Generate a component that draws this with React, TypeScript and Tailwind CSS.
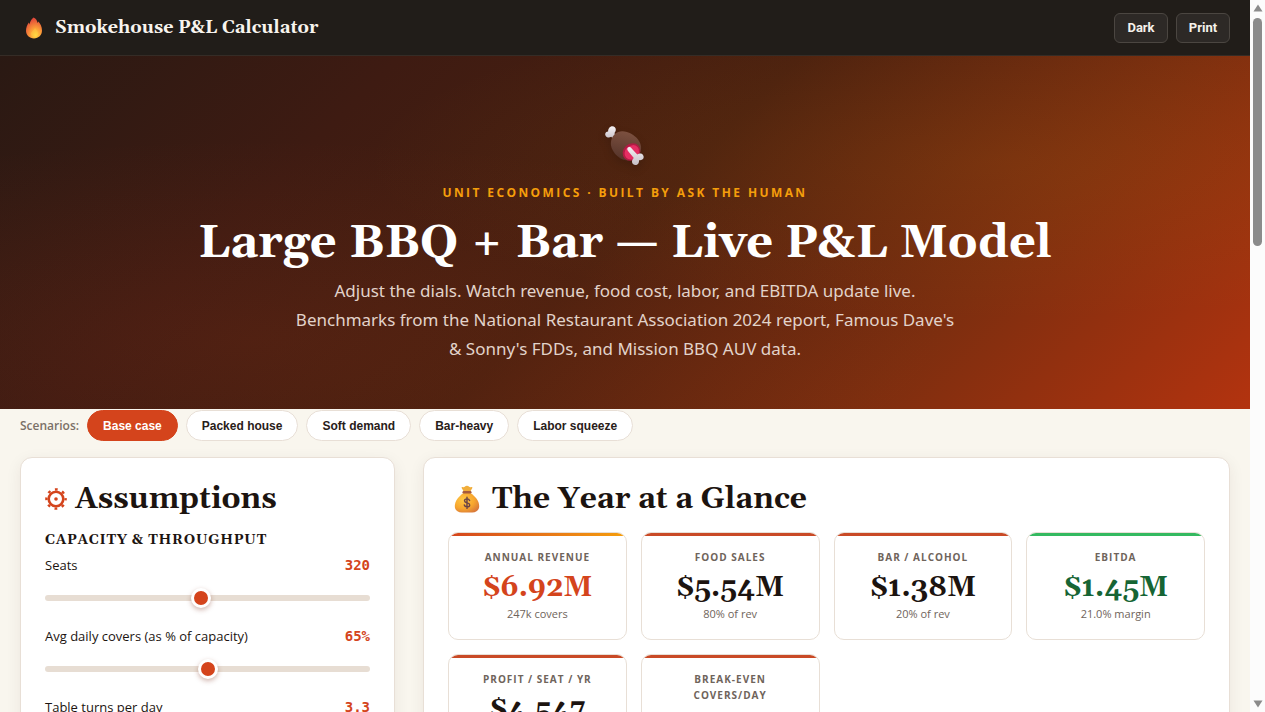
import { useState } from 'react';
import type { ReactNode } from 'react';

const scenarios = ['Base case', 'Packed house', 'Soft demand', 'Bar-heavy', 'Labor squeeze'];

const dials = [
  { id: 'seats', label: 'Seats', min: 80, max: 580, step: 10, value: 320, format: (v: number) => `${v}` },
  {
    id: 'covers',
    label: 'Avg daily covers (as % of capacity)',
    min: 30,
    max: 100,
    step: 1,
    value: 65,
    format: (v: number) => `${v}%`,
  },
  { id: 'turns', label: 'Table turns per day', min: 1, max: 6, step: 0.1, value: 3.3, format: (v: number) => v.toFixed(1) },
];

const kpis = [
  {
    label: 'Annual Revenue',
    value: '$6.92M',
    sub: '247k covers',
    bar: 'bg-linear-to-r from-[#d4441c] to-[#f59e0b]',
    color: 'text-[#d4441c]',
  },
  { label: 'Food Sales', value: '$5.54M', sub: '80% of rev', bar: 'bg-[#c94a26]', color: 'text-[#1c1410]' },
  { label: 'Bar / Alcohol', value: '$1.38M', sub: '20% of rev', bar: 'bg-[#c94a26]', color: 'text-[#1c1410]' },
  { label: 'EBITDA', value: '$1.45M', sub: '21.0% margin', bar: 'bg-[#34b960]', color: 'text-[#166534]' },
  { label: 'Profit / Seat / Yr', value: '$4,547', sub: '', bar: 'bg-[#c94a26]', color: 'text-[#1c1410]' },
  { label: 'Break-Even Covers/Day', value: '', sub: '', bar: 'bg-[#c94a26]', color: 'text-[#1c1410]' },
];

function Flame() {
  return (
    <svg viewBox="0 0 18 22" className="h-[22px] w-[18px]" aria-hidden="true">
      <defs>
        <radialGradient id="flame" cx="0.6" cy="0.85" r="0.8">
          <stop offset="0" stopColor="#ffd83f" />
          <stop offset="0.45" stopColor="#fb9a38" />
          <stop offset="1" stopColor="#e2493a" />
        </radialGradient>
      </defs>
      <path
        d="M8.6.6c2.6 1 3.5 3 4 5.300.3-.5.5-1 .7-1.500 2 2.200 3.700 5 3.700 9.200 0 4.600-3.400 7.800-8 7.800s-8-3.200-8-7.600c0-3.200 1.200-6 2.900-8.200.3.600.5 1.300.7 1.900C5 5 6 2.600 8.600.6z"
        fill="url(#flame)"
      />
      <path d="M10 11c2 2 3 3.600 3 5.500 0 2-1.400 3.600-3.700 3.600S6 18.600 6 16.600C6 14.500 8.600 13.500 10 11z" fill="#ffdc48" opacity="0.3" />
    </svg>
  );
}

function MeatBone() {
  return (
    <svg viewBox="0 0 44 44" className="h-11 w-11 drop-shadow-lg" aria-hidden="true">
      <defs>
        <linearGradient id="meat" x1="0.6" y1="0" x2="0.4" y2="1">
          <stop offset="0" stopColor="#7d5140" />
          <stop offset="1" stopColor="#55342a" />
        </linearGradient>
        <linearGradient id="bone" x1="0" y1="0" x2="0" y2="1">
          <stop offset="0" stopColor="#f5f1f4" />
          <stop offset="1" stopColor="#c5bfc6" />
        </linearGradient>
      </defs>
      <path
        d="M2.500 11.500c-1-2.200.5-4 2.600-4.100C5.200 4.500 7 2.300 9.300 2.300c2.200 0 3.700 1.700 3.500 3.700-.1 1.500-.9 2.300-1.400 3.300l3 3.400-3.200 3-3-2.900c-2 1.300-4.700 1-5.700-1.300z"
        fill="url(#bone)"
      />
      <path
        d="M8.200 16.500C9.500 10.700 14 7 19.500 7.200c5.800.3 12.300 3.900 15.500 8.200 3.800 5 4 10.500 1.300 14.600-2.600 4-9 7.500-14.600 6.100-5-1.200-9.700-5.700-12-9.900-1.800-3.300-2.300-6.400-1.500-9.700z"
        fill="url(#meat)"
      />
      <ellipse cx="28.500" cy="28" rx="9.400" ry="8.200" transform="rotate(-43 28.500 28)" fill="#b01c44" />
      <ellipse cx="28.800" cy="28.300" rx="7.800" ry="6.600" transform="rotate(-43 28.800 28.300)" fill="#e52e63" />
      <path
        d="M24.500 26.100c-.8-1.400.4-3.200 2.100-3 1.100.1 1.700.9 2.500 1.900l5.200 5.600c1.800-1.600 4.500-1.300 5.700.4 1.200 1.600.8 3.600-.7 4.600-1.200.8-2.300.8-3.300.6.200 2.100-.5 4.200-2.600 4.700-2.300.6-4.500-1.100-4.400-3.400 0-1.700.9-2.700 1.800-3.600l-5-6c-.5-.6-1-1.200-1.300-1.800z"
        fill="url(#bone)"
      />
    </svg>
  );
}

function Gear() {
  return (
    <svg viewBox="0 0 22 22" className="h-[22px] w-[22px]" fill="none" stroke="#d4441c" aria-hidden="true">
      <circle cx="11" cy="11" r="7.300" strokeWidth="2.600" />
      <circle cx="11" cy="11" r="9.600" strokeWidth="2.400" strokeDasharray="2.800 4.740" strokeDashoffset="1.400" />
      <circle cx="11" cy="11" r="1.800" fill="#d4441c" stroke="none" />
    </svg>
  );
}

function MoneyBag() {
  return (
    <svg viewBox="0 0 26 28" className="h-7 w-[26px]" aria-hidden="true">
      <defs>
        <radialGradient id="bag" cx="0.35" cy="0.35" r="0.75">
          <stop offset="0" stopColor="#ffc845" />
          <stop offset="0.6" stopColor="#f7a62e" />
          <stop offset="1" stopColor="#d9793a" />
        </radialGradient>
      </defs>
      <path d="M8.500 2.100c1.200.4 2 .1 2.500-.6.700-.9 3.200-.9 3.900 0 .6.700 1.500 1 2.600.6.800-.2 1.100.5.700 1.200L16 7h-6L7.800 3.300c-.4-.7-.1-1.400.7-1.200z" fill="#f1ae3b" />
      <path d="M9.500 8h7c4.600 3.200 8.700 8 8.700 13 0 4.300-3 6.500-7 6.500H7.800c-4 0-7-2.200-7-6.500 0-5 4.100-9.800 8.700-13z" fill="url(#bag)" />
      <rect x="8.500" y="6.100" width="9" height="2.400" rx="1.200" fill="#a65b3d" />
      <path d="M15.600 15.500c-.4-1.100-1.300-1.600-2.600-1.600-1.500 0-2.500.7-2.500 1.900 0 2.800 5.200 1.400 5.200 4.100 0 1.200-1.100 1.900-2.600 1.900-1.400 0-2.500-.6-2.800-1.800M13 12.300v11.100" fill="none" stroke="#684347" strokeWidth="1.400" strokeLinecap="round" />
    </svg>
  );
}

function HeaderButton({ children }: { children: ReactNode }) {
  return (
    <button
      type="button"
      className="h-[30px] w-[54px] rounded-md border border-[#4b4641] bg-[#2d2926] font-[Roboto,sans-serif] text-[13px] font-bold text-[#f5f1eb]"
    >
      {children}
    </button>
  );
}

function Dial({ dial }: { dial: (typeof dials)[number] }) {
  const [value, setValue] = useState(dial.value);

  return (
    <div className="mb-[14px]">
      <div className="flex items-center justify-between text-[13px] leading-5">
        <label htmlFor={dial.id} className="font-medium text-[#1c1410]">
          {dial.label}
        </label>
        <output htmlFor={dial.id} className="font-['DejaVu_Sans_Mono',monospace] text-[14px] font-bold text-[#d4441c]">
          {dial.format(value)}
        </output>
      </div>
      <input
        id={dial.id}
        type="range"
        className="dial mt-[9px] block w-full"
        min={dial.min}
        max={dial.max}
        step={dial.step}
        value={value}
        onChange={(e) => setValue(Number(e.target.value))}
      />
    </div>
  );
}

function Scrollbar() {
  return (
    <div className="flex w-[15px] shrink-0 flex-col items-center justify-between bg-[#fcfcfc] py-1" aria-hidden="true">
      <div className="flex flex-col items-center gap-[6px]">
        <svg viewBox="0 0 10 8" className="h-2 w-[10px]">
          <path d="M5 .5 9.500 7.500H.5z" fill="#8b8b8b" />
        </svg>
        <div className="h-[228px] w-[9px] rounded-full bg-[#8b8b8b]" />
      </div>
      <svg viewBox="0 0 10 8" className="h-2 w-[10px]">
        <path d="M5 7.500.5.5h9z" fill="#8b8b8b" />
      </svg>
    </div>
  );
}

export default function App() {
  const [active, setActive] = useState('Base case');

  return (
    <div className="flex h-screen overflow-hidden bg-[#f9f6ee] font-['Open_Sans',sans-serif] text-[#1c1410]">
      <style>{`
        .serif {
          font-family: Georgia, Gelasio, 'DejaVu Serif Condensed', 'DejaVu Serif', serif;
          font-weight: 700;
        }
        .hero {
          background:
            radial-gradient(ellipse at 20% 80%, rgba(212, 68, 28, 0.1), transparent 50%),
            radial-gradient(ellipse at 80% 30%, rgba(200, 120, 11, 0.12), transparent 45%),
            linear-gradient(135deg, #2a1913 0%, #3e1b12 25%, #4a200f 50%, #7c2e0f 75%, #b3330f 100%);
        }
        .dial {
          appearance: none;
          height: 28px;
          background: transparent;
        }
        .dial::-webkit-slider-runnable-track {
          height: 6px;
          border-radius: 3px;
          background: #e7ddd3;
        }
        .dial::-webkit-slider-thumb {
          appearance: none;
          width: 20px;
          height: 20px;
          margin-top: -7px;
          border: 3px solid #fff;
          border-radius: 50%;
          background: #d4441c;
          box-shadow: 0 2px 5px rgba(120, 40, 20, 0.35);
        }
      `}</style>

      <div className="min-w-0 flex-1 overflow-hidden">
        <header className="flex h-14 items-center justify-between border-b border-[#352c26] bg-[#211d19] pr-5 pl-[25px]">
          <div className="flex items-center gap-3">
            <Flame />
            <span className="serif text-[18px] text-[#f8f4ee]">Smokehouse P&amp;L Calculator</span>
          </div>
          <div className="flex gap-2">
            <HeaderButton>Dark</HeaderButton>
            <HeaderButton>Print</HeaderButton>
          </div>
        </header>

        <section className="hero flex flex-col items-center px-6 pt-[68px] pb-[46px] text-center">
          <MeatBone />
          <p className="mt-[13px] text-xs leading-6 font-bold tracking-[0.2em] text-[#f59e0b] uppercase">
            Unit economics · Built by Ask the Human
          </p>
          <h1 className="serif mt-[9px] text-[47px] leading-[58px] text-white">
            Large BBQ + Bar — Live P&amp;L Model
          </h1>
          <p className="mt-1 max-w-[670px] font-['Noto_Sans',sans-serif] text-[17px] leading-[29px] text-[#e2d3ca]">
            Adjust the dials. Watch revenue, food cost, labor, and EBITDA update live. Benchmarks from the
            National Restaurant Association 2024 report, Famous Dave's &amp; Sonny's FDDs, and Mission BBQ AUV data.
          </p>
        </section>

        <main className="mt-px px-5">
          <div className="flex items-center gap-2">
            <span className="text-xs font-semibold text-[#7b7067]">Scenarios:</span>
            {scenarios.map((name) => (
              <button
                key={name}
                type="button"
                onClick={() => setActive(name)}
                className={`h-[31px] rounded-full border px-[15px] font-['Liberation_Sans',sans-serif] text-xs font-bold ${
                  active === name ? 'border-[#d4441c] bg-[#d4441c] text-white' : 'border-[#e8dfd6] bg-white text-[#292019]'
                }`}
              >
                {name}
              </button>
            ))}
          </div>

          <div className="mt-4 grid grid-cols-[375px_1fr] gap-7">
            <section className="rounded-xl border border-[#e8dfd6] bg-white p-6 shadow-[0_4px_16px_rgba(60,35,15,0.07)]">
              <h2 className="serif flex items-center gap-2 text-[30px] leading-[34px]">
                <Gear />
                Assumptions
              </h2>
              <h3 className="serif mt-[11px] mb-[2px] text-[14px] leading-[26px] tracking-wider uppercase">
                Capacity &amp; Throughput
              </h3>
              {dials.map((dial) => (
                <Dial key={dial.id} dial={dial} />
              ))}
            </section>

            <section className="rounded-xl border border-[#e8dfd6] bg-white p-6 shadow-[0_4px_16px_rgba(60,35,15,0.07)]">
              <h2 className="serif flex items-center gap-3 pl-[6px] text-[30px] leading-[34px]">
                <MoneyBag />
                The Year at a Glance
              </h2>
              <div className="mt-4 grid grid-cols-4 gap-[14px]">
                {kpis.map((kpi) => (
                  <div key={kpi.label} className="overflow-hidden rounded-[10px] border border-[#e8dfd6] bg-white pb-[17px] text-center">
                    <div className={`h-[3px] ${kpi.bar}`} />
                    <div className="px-6 pt-[13px]">
                      <div className="text-[10px] leading-4 font-bold tracking-widest text-[#6f645b] uppercase">{kpi.label}</div>
                      <div className={`serif pt-[5px] text-[28px] leading-[36px] ${kpi.color}`}>{kpi.value}</div>
                      <div className="text-[11px] leading-4 text-[#6f645b]">{kpi.sub}</div>
                    </div>
                  </div>
                ))}
              </div>
            </section>
          </div>
        </main>
      </div>
      <Scrollbar />
    </div>
  );
}
